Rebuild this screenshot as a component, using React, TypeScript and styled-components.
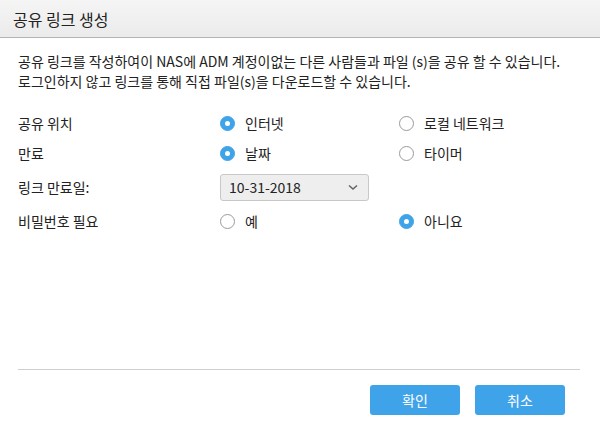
import styled, { createGlobalStyle } from 'styled-components';

const GlobalStyle = createGlobalStyle`
  html, body {
    margin: 0;
    padding: 0;
    background: #ffffff;
  }
  body {
    font-family: "Noto Sans CJK KR", "Noto Sans", sans-serif;
    color: #222;
  }
`;

const Dialog = styled.div`
  width: 600px;
  height: 428px;
  display: flex;
  flex-direction: column;
  background: #ffffff;
`;

const Header = styled.div`
  height: 37px;
  display: flex;
  align-items: center;
  padding-left: 13px;
  background: linear-gradient(#f5f5f5, #ebebeb);
  border-bottom: 1px solid #b4b4b4;
  font-size: 16px;
  color: #222;
`;

const Body = styled.div`
  flex: 1;
  padding: 13px 18px 0 18px;
  display: flex;
  flex-direction: column;
`;

const Description = styled.p`
  margin: 0 0 17px 0;
  font-size: 14px;
  line-height: 20px;
  color: #222;
`;

const Row = styled.div<{ $h: number }>`
  display: grid;
  grid-template-columns: 202px 179px 1fr;
  align-items: center;
  height: ${p => p.$h}px;
  font-size: 14px;
`;

const Label = styled.div`
  color: #222;
`;

const Option = styled.label`
  display: flex;
  align-items: center;
  gap: 10px;
  cursor: pointer;
`;

const Radio = styled.span<{ $on?: boolean }>`
  width: 15px;
  height: 15px;
  border-radius: 50%;
  box-sizing: border-box;
  display: flex;
  align-items: center;
  justify-content: center;
  background: ${p => (p.$on ? '#3fa3ea' : '#fff')};
  border: 1px solid ${p => (p.$on ? '#3fa3ea' : '#9a9a9a')};
  &::after {
    content: '';
    width: 5px;
    height: 5px;
    border-radius: 50%;
    background: #fff;
    display: ${p => (p.$on ? 'block' : 'none')};
  }
`;

const Select = styled.div`
  width: 149px;
  height: 27px;
  box-sizing: border-box;
  border: 1px solid #c8c8c8;
  border-radius: 3px;
  background: #eeeeee;
  display: flex;
  align-items: center;
  justify-content: space-between;
  padding: 0 10px 0 8px;
  font-size: 14px;
  color: #222;
`;

const Footer = styled.div`
  margin: 0 20px 0 18px;
  border-top: 1px solid #cfcfcf;
  height: 59px;
  box-sizing: border-box;
  display: flex;
  justify-content: flex-end;
  align-items: flex-start;
  gap: 15px;
  padding: 15px 15px 0 0;
`;

const Button = styled.button`
  width: 90px;
  height: 30px;
  border: none;
  border-radius: 3px;
  background: #3fa3ea;
  color: #fff;
  font-family: inherit;
  font-size: 14px;
  cursor: pointer;
  &:hover {
    background: #3596dc;
  }
`;

const Chevron = () => (
  <svg width="10" height="7" viewBox="0 0 10 7">
    <path d="M1 1.5 L5 5 L9 1.5" fill="none" stroke="#666" strokeWidth="1.6" />
  </svg>
);

const App = () => {
  return (
    <Dialog>
      <GlobalStyle />
      <Header>공유 링크 생성</Header>
      <Body>
        <Description>
          공유 링크를 작성하여이 NAS에 ADM 계정이없는 다른 사람들과 파일 (s)을 공유 할 수 있습니다.
          <br />
          로그인하지 않고 링크를 통해 직접 파일(s)을 다운로드할 수 있습니다.
        </Description>
        <Row $h={30}>
          <Label>공유 위치</Label>
          <Option><Radio $on />인터넷</Option>
          <Option><Radio />로컬 네트워크</Option>
        </Row>
        <Row $h={30}>
          <Label>만료</Label>
          <Option><Radio $on />날짜</Option>
          <Option><Radio />타이머</Option>
        </Row>
        <Row $h={38}>
          <Label>링크 만료일:</Label>
          <Select>
            <span>10-31-2018</span>
            <Chevron />
          </Select>
        </Row>
        <Row $h={30}>
          <Label>비밀번호 필요</Label>
          <Option><Radio />예</Option>
          <Option><Radio $on />아니요</Option>
        </Row>
      </Body>
      <Footer>
        <Button>확인</Button>
        <Button>취소</Button>
      </Footer>
    </Dialog>
  );
};

export default App;
